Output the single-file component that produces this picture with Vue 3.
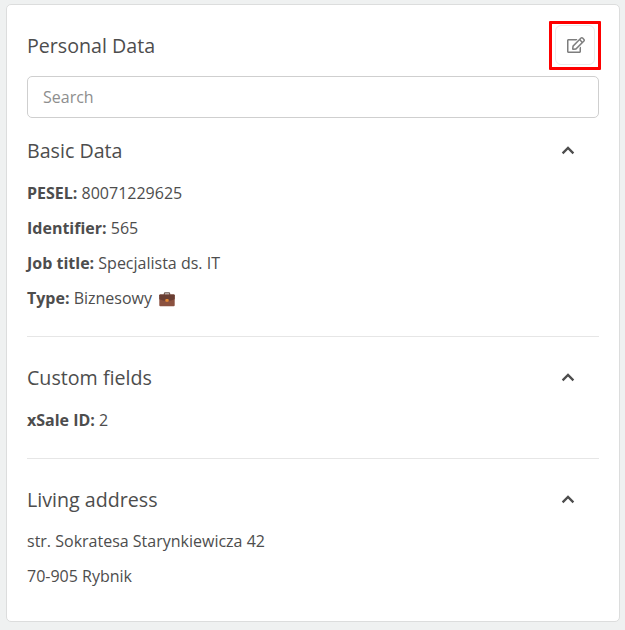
<script setup>
import { ref } from 'vue'

const query = ref('')
const sections = [
  {
    title: 'Basic Data',
    rows: [
      { label: 'PESEL:', value: '80071229625' },
      { label: 'Identifier:', value: '565' },
      { label: 'Job title:', value: 'Specjalista ds. IT' },
      { label: 'Type:', value: 'Biznesowy', briefcase: true },
    ],
  },
  { title: 'Custom fields', rows: [{ label: 'xSale ID:', value: '2' }] },
  {
    title: 'Living address',
    rows: [{ value: 'str. Sokratesa Starynkiewicza 42' }, { value: '70-905 Rybnik' }],
  },
]
</script>

<template>
  <main class="page">
    <article class="card">
      <header class="header">
        <h2 class="title">Personal Data</h2>
        <button class="edit" type="button" aria-label="Edit">
          <svg width="18" height="16" viewBox="0 0 576 512" fill="currentColor">
            <path d="M402.3 344.900l32-32c5-5 13.700-1.500 13.700 5.700V464c0 26.500-21.500 48-48 48H48c-26.500 0-48-21.500-48-48V112c0-26.500 21.500-48 48-48h273.500c7.100 0 10.700 8.600 5.700 13.700l-32 32c-1.500 1.500-3.500 2.300-5.700 2.300H48v352h352V350.500c0-2.100.8-4.100 2.300-5.600zm156.600-201.800L296.300 405.700l-90.400 10c-26.200 2.900-48.500-19.200-45.600-45.600l10-90.400L432.900 17.100c22.900-22.900 59.900-22.900 82.700 0l43.200 43.200c22.900 22.900 22.900 60 .1 82.800zM460.100 174L402 115.900 216.200 301.800l-7.300 65.300 65.300-7.300L460.100 174zm64.800-79.700l-43.200-43.200c-4.100-4.100-10.800-4.100-14.800 0L436 82l58.100 58.100 30.900-30.900c4-4.200 4-10.800-.1-14.900z" />
          </svg>
          <span class="highlight"></span>
        </button>
      </header>
      <input v-model="query" class="search" type="text" placeholder="Search" />
      <section v-for="section in sections" :key="section.title" class="section">
        <div class="section-head">
          <h3 class="title">{{ section.title }}</h3>
          <svg class="chevron" width="14" height="9" viewBox="0 0 14 9" fill="none">
            <path d="M1.600 7.400L7 2L12.400 7.400" stroke="currentColor" stroke-width="2.300" />
          </svg>
        </div>
        <p v-for="row in section.rows" :key="row.value" class="row">
          <span><template v-if="row.label"><strong>{{ row.label }}</strong>&nbsp;</template>{{ row.value }}</span>
          <svg v-if="row.briefcase" class="briefcase" width="16" height="15" viewBox="0 0 16 15">
            <path d="M5.300 3V1.800Q5.300 .9 6.200 .9H9.800Q10.700 .9 10.700 1.800V3" fill="none" stroke="#6b554d" stroke-width="1.100" />
            <rect x="0.300" y="2.400" width="15.400" height="11.900" rx="1" fill="#8b5140" />
            <path d="M0.300 3.200Q.3 2.400 1.100 2.400H14.900Q15.700 2.400 15.700 3.200V7.200Q12 8.800 8 8.800T.3 7.200Z" fill="#693e33" />
            <rect x="6.300" y="6.900" width="3.400" height="2.900" rx="1" fill="#e88b35" />
          </svg>
        </p>
      </section>
    </article>
  </main>
</template>

<style>
body {
  background: #eff1f1;
}
</style>

<style scoped>
.page {
  box-sizing: border-box;
  height: 630px;
  padding: 4px 5px 8px 6px;
  font-family: 'Open Sans', sans-serif;
  font-size: 16px;
  color: #4d4d4d;
}
.card {
  box-sizing: border-box;
  height: 618px;
  padding: 20px 20px 0;
  background: #fff;
  border: 1px solid #dcdddd;
  border-radius: 5px;
}
.header {
  display: flex;
  align-items: center;
  justify-content: space-between;
  height: 40px;
  padding-right: 4px;
}
.title {
  margin: 0;
  padding-top: 1px;
  font-size: 19.65px;
  font-weight: 400;
  line-height: 39px;
}
.edit {
  position: relative;
  display: flex;
  align-items: center;
  justify-content: center;
  box-sizing: border-box;
  width: 40px;
  height: 40px;
  padding: 0 0 0 1px;
  color: #7d7d7d;
  background: #fff;
  border: 1px solid #eaebeb;
  border-radius: 6px;
}
.highlight {
  position: absolute;
  inset: -5px -7px -6px -7px;
  border: 3px solid #fe0000;
  border-radius: 1px;
}
.search {
  display: block;
  box-sizing: border-box;
  width: 572px;
  height: 42px;
  margin: 11px 0 12px;
  padding: 0 15px 1px;
  font: inherit;
  color: inherit;
  border: 1px solid #cfcfcf;
  border-radius: 5px;
  outline: none;
}
.search::placeholder {
  color: #8e8e8e;
  opacity: 1;
}
.section {
  width: 572px;
}
.section + .section {
  margin-top: 20px;
  padding-top: 20px;
  border-top: 1px solid #e6e6e6;
}
.section-head {
  display: flex;
  align-items: center;
  justify-content: space-between;
  height: 40px;
  margin-bottom: 6px;
  padding-right: 24px;
}
.section:last-child .section-head {
  margin-bottom: 5px;
}
.row {
  display: flex;
  align-items: center;
  gap: 7px;
  height: 35px;
  margin: 0;
  line-height: 35px;
  white-space: nowrap;
}
.briefcase {
  margin-top: 1px;
}
</style>
